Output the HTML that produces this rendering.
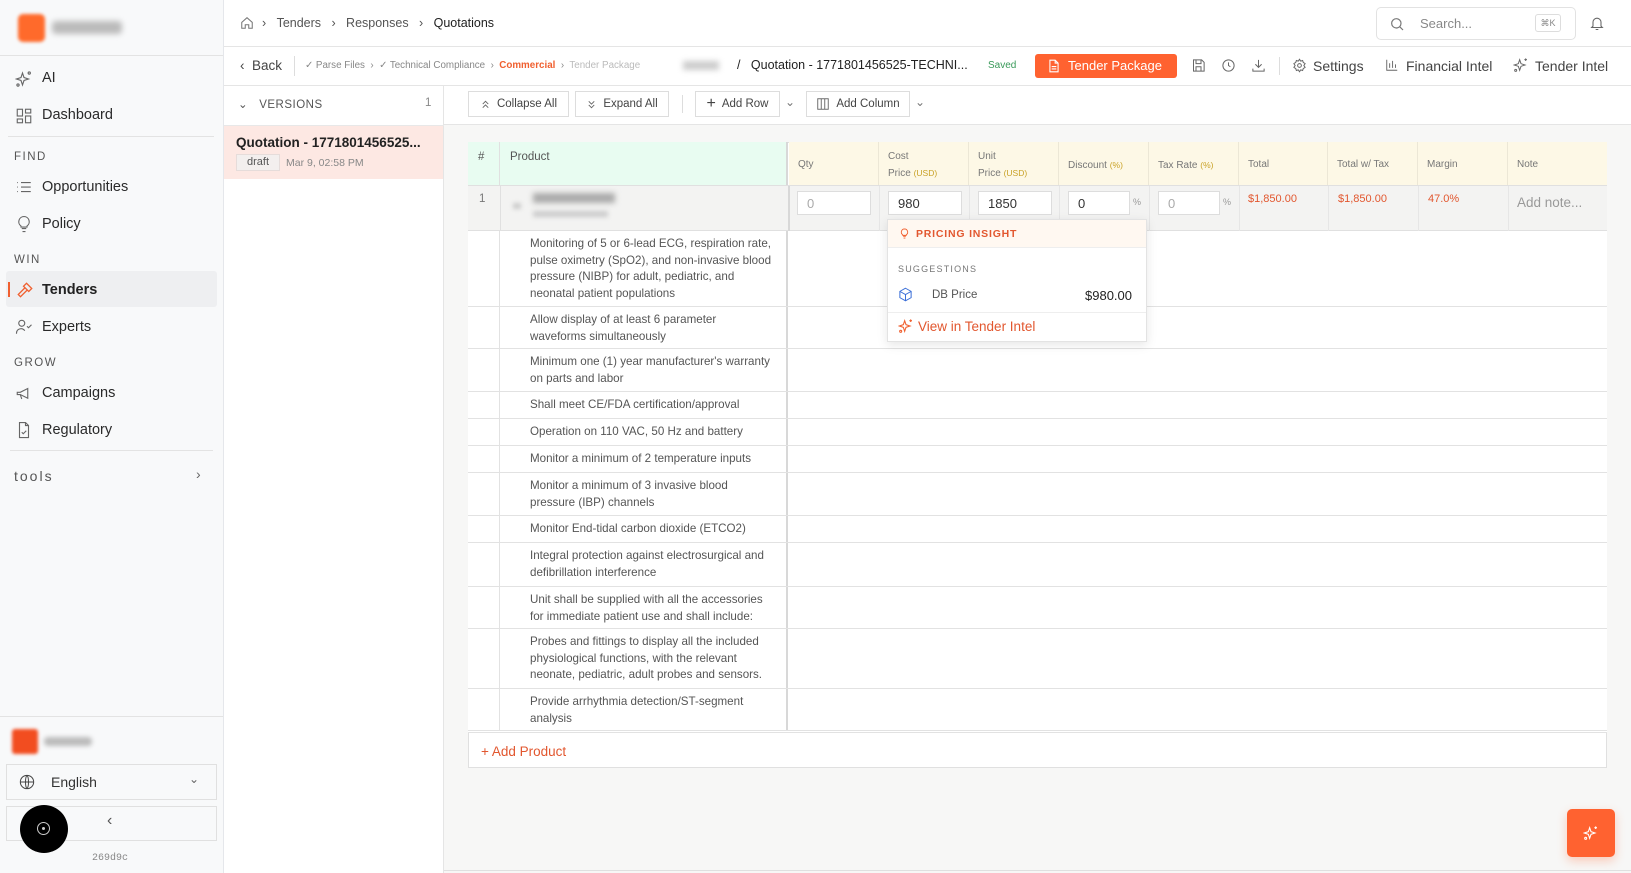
<!DOCTYPE html>
<html><head><meta charset="utf-8"><style>
*{box-sizing:border-box;margin:0;padding:0}
body{width:1631px;height:873px;overflow:hidden;font-family:"Liberation Sans",sans-serif;color:#333;background:#fff;position:relative}
.a{position:absolute}
.side{left:0;top:0;width:224px;height:873px;background:#f8f9fa;border-right:1px solid #e5e7eb}
.nav{position:absolute;left:42px;font-size:14.5px;color:#2a2a2a}
.ic{position:absolute;left:15px;width:18px;height:18px}
.sec{position:absolute;left:14px;font-size:11.5px;letter-spacing:1.5px;color:#555}
.hdr{font-size:12.5px;color:#555}
.btn{position:absolute;border:1px solid #ddd;background:#fff;font-size:11.5px;color:#444;display:flex;align-items:center;justify-content:center;gap:6px;height:26px;top:91px}
.th{position:absolute;top:142px;height:43px;background:#fdf8e6;border-right:1px solid #ece7d6;font-size:10px;color:#777;padding:7px 0 0 9px;line-height:16px}
.th .u{color:#c9a227;font-size:8.5px}
.in{position:absolute;top:191px;height:24px;background:#fff;border:1px solid #ddd;font-size:13px;padding:4px 0 0 9px;width:74px}
.sr{position:absolute;left:468px;width:1139px;border-bottom:1px solid #e2e2e2;background:#fff}
.sr .n{position:absolute;left:0;top:0;bottom:0;width:32px;border-right:1px solid #e2e2e2}
.sr .p{position:absolute;left:32px;top:0;bottom:0;width:288px;border-right:2px solid #d8d8d8;padding:5px 0 0 30px;font-size:11.6px;line-height:16.5px;color:#555;white-space:nowrap;overflow:hidden}
</style></head><body>

<div class="a side">
 <div class="a" style="left:18px;top:14px;width:27px;height:28px;background:#ff6a2b;border-radius:5px;filter:blur(1.5px)"></div>
 <div class="a" style="left:52px;top:21px;width:70px;height:13px;background:#bbb;border-radius:4px;filter:blur(3px)"></div>
 <div class="a" style="left:0;top:55px;width:223px;border-top:1px solid #e3e3e3"></div>
 <svg class="ic" style="top:70px" viewBox="0 0 24 24" fill="none" stroke="#666" stroke-width="1.5"><path d="M10 4l2 6 6 2-6 2-2 6-2-6-6-2 6-2z"/><circle cx="19" cy="4" r="1.5"/><circle cx="4" cy="20" r="1.5"/></svg>
 <div class="nav" style="top:70px">AI</div>
 <svg class="ic" style="top:107px" viewBox="0 0 24 24" fill="none" stroke="#666" stroke-width="1.5"><rect x="3" y="3" width="7" height="9"/><rect x="14" y="3" width="7" height="5"/><rect x="14" y="12" width="7" height="9"/><rect x="3" y="16" width="7" height="5"/></svg>
 <div class="nav" style="top:107px">Dashboard</div>
 <div class="a" style="left:8px;top:136px;width:206px;border-top:1px solid #e3e3e3"></div>
 <div class="sec" style="top:151px">FIND</div>
 <svg class="ic" style="top:178px" viewBox="0 0 24 24" fill="none" stroke="#666" stroke-width="1.5"><path d="M8 6h13M8 12h13M8 18h13M3 6h1M3 12h1M3 18h1"/></svg>
 <div class="nav" style="top:179px">Opportunities</div>
 <svg class="ic" style="top:215px" viewBox="0 0 24 24" fill="none" stroke="#666" stroke-width="1.5"><path d="M9 18h6M10 22h4M12 2a7 7 0 0 0-4 12.7V16h8v-1.3A7 7 0 0 0 12 2z"/></svg>
 <div class="nav" style="top:216px">Policy</div>
 <div class="sec" style="top:254px">WIN</div>
 <div class="a" style="left:6px;top:271px;width:211px;height:36px;background:#eeeff1;border-radius:3px"></div>
 <div class="a" style="left:8px;top:282px;width:2px;height:15px;background:#f06030"></div>
 <svg class="ic" style="top:281px;left:16px" viewBox="0 0 24 24" fill="none" stroke="#f06030" stroke-width="1.7"><path d="M14 3l7 7-4 4-7-7z M12 9l-9 9 3 3 9-9"/></svg>
 <div class="nav" style="top:282px;font-weight:bold;color:#222">Tenders</div>
 <svg class="ic" style="top:318px" viewBox="0 0 24 24" fill="none" stroke="#666" stroke-width="1.5"><circle cx="9" cy="7" r="4"/><path d="M2 21v-1a6 6 0 0 1 11-3M16 11l2 2 4-4"/></svg>
 <div class="nav" style="top:319px">Experts</div>
 <div class="sec" style="top:357px">GROW</div>
 <svg class="ic" style="top:384px" viewBox="0 0 24 24" fill="none" stroke="#666" stroke-width="1.5"><path d="M3 11v3h4l10 5V6L7 11H3zM7 14l2 6"/></svg>
 <div class="nav" style="top:385px">Campaigns</div>
 <svg class="ic" style="top:421px" viewBox="0 0 24 24" fill="none" stroke="#666" stroke-width="1.5"><path d="M14 2H6v20h12V6zM14 2v4h4M9 15l2 2 4-4"/></svg>
 <div class="nav" style="top:422px">Regulatory</div>
 <div class="a" style="left:10px;top:450px;width:203px;border-top:1px solid #e3e3e3"></div>
 <div class="a" style="left:14px;top:468px;font-size:14px;letter-spacing:2px;color:#555">tools</div>
 <div class="a" style="left:196px;top:466px;font-size:14px;color:#666">›</div>
 <div class="a" style="left:0;top:716px;width:223px;border-top:1px solid #e3e3e3"></div>
 <div class="a" style="left:12px;top:729px;width:26px;height:25px;background:#f24d20;border-radius:3px;filter:blur(1.5px)"></div>
 <div class="a" style="left:44px;top:737px;width:48px;height:9px;background:#bbb;border-radius:4px;filter:blur(2.5px)"></div>
 <div class="a" style="left:6px;top:764px;width:211px;height:36px;border:1px solid #e0e0e0;background:#f8f9fa"></div>
 <svg class="a" style="left:19px;top:774px;width:16px;height:16px" viewBox="0 0 24 24" fill="none" stroke="#444" stroke-width="1.5"><circle cx="12" cy="12" r="10"/><path d="M2 12h20M12 2c3 3 3 17 0 20M12 2c-3 3-3 17 0 20"/></svg>
 <div class="a" style="left:51px;top:774px;font-size:14px;color:#333">English</div>
 <div class="a" style="left:189px;top:772px;font-size:12px;color:#666">⌄</div>
 <div class="a" style="left:6px;top:806px;width:211px;height:35px;border:1px solid #e0e0e0;background:#f8f9fa"></div>
 <div class="a" style="left:107px;top:812px;font-size:16px;color:#555">‹</div>
 <div class="a" style="left:20px;top:805px;width:48px;height:48px;border-radius:50%;background:#000"></div>
 <div class="a" style="left:37px;top:822px;width:13px;height:13px;border:1.3px solid #ccc;border-radius:50%"></div>
 <div class="a" style="left:42px;top:827px;width:3px;height:3px;background:#ccc;border-radius:50%"></div>
 <div class="a" style="left:92px;top:853px;font-size:10px;color:#888;font-family:'Liberation Mono',monospace">269d9c</div>
</div>

<div class="a" style="left:224px;top:0;width:1407px;height:47px;border-bottom:1px solid #e5e5e5"></div>
<svg class="a" style="left:240px;top:16px;width:14px;height:14px" viewBox="0 0 24 24" fill="none" stroke="#777" stroke-width="1.8"><path d="M3 11l9-8 9 8v10h-6v-6h-6v6H3z"/></svg>
<div class="a hdr" style="left:262px;top:16px">›&nbsp;&nbsp;&nbsp;Tenders&nbsp;&nbsp;&nbsp;›&nbsp;&nbsp;&nbsp;Responses&nbsp;&nbsp;&nbsp;›&nbsp;&nbsp;&nbsp;<span style="color:#222">Quotations</span></div>
<div class="a" style="left:1376px;top:7px;width:200px;height:33px;border:1px solid #e2e2e2;border-radius:5px"></div>
<svg class="a" style="left:1389px;top:16px;width:16px;height:16px" viewBox="0 0 24 24" fill="none" stroke="#777" stroke-width="1.8"><circle cx="11" cy="11" r="7"/><path d="M16 16l5 5"/></svg>
<div class="a" style="left:1420px;top:16px;font-size:13px;color:#888">Search...</div>
<div class="a" style="left:1535px;top:14px;width:26px;height:18px;border:1px solid #ddd;border-radius:3px;font-size:9px;color:#888;text-align:center;line-height:16px">⌘K</div>
<svg class="a" style="left:1589px;top:15px;width:16px;height:17px" viewBox="0 0 24 24" fill="none" stroke="#666" stroke-width="1.6"><path d="M6 16V10a6 6 0 0 1 12 0v6l2 2H4zM10 21h4"/></svg>

<div class="a" style="left:224px;top:47px;width:1407px;height:39px;border-bottom:1px solid #e5e5e5"></div>
<div class="a" style="left:240px;top:58px;font-size:13.5px;color:#444">‹&nbsp; Back</div>
<div class="a" style="left:294px;top:56px;height:20px;border-left:1px solid #ddd"></div>
<div class="a" style="left:305px;top:60px;font-size:9.8px;color:#888">✓ Parse Files&nbsp; ›&nbsp; ✓ Technical Compliance&nbsp; ›&nbsp; <b style="color:#f06030">Commercial</b>&nbsp; ›&nbsp; <span style="color:#bbb">Tender Package</span></div>
<div class="a" style="left:683px;top:61px;width:36px;height:9px;background:#ccc;filter:blur(3px)"></div>
<div class="a" style="left:737px;top:58px;font-size:12.5px;color:#222">/&nbsp;&nbsp; Quotation - 1771801456525-TECHNI...</div>
<div class="a" style="left:988px;top:60px;font-size:10px;color:#3a9a5a">Saved</div>
<div class="a" style="left:1035px;top:54px;width:142px;height:24px;background:#ff6230;border-radius:3px;color:#fff;font-size:13px;line-height:24px;padding-left:33px">Tender Package</div>
<svg class="a" style="left:1047px;top:59px;width:14px;height:14px" viewBox="0 0 24 24" fill="none" stroke="#fff" stroke-width="1.8"><path d="M14 2H5v20h14V7zM14 2v5h5M8 13h8M8 17h8"/></svg>
<svg class="a" style="left:1191px;top:58px;width:15px;height:15px" viewBox="0 0 24 24" fill="none" stroke="#666" stroke-width="1.6"><path d="M4 3h13l4 4v14H4zM8 3v6h8V3M8 21v-7h8v7"/></svg>
<svg class="a" style="left:1221px;top:58px;width:15px;height:15px" viewBox="0 0 24 24" fill="none" stroke="#666" stroke-width="1.6"><circle cx="12" cy="12" r="9"/><path d="M12 7v5l3 2"/></svg>
<svg class="a" style="left:1251px;top:58px;width:15px;height:15px" viewBox="0 0 24 24" fill="none" stroke="#666" stroke-width="1.6"><path d="M12 3v12M7 10l5 5 5-5M3 17v4h18v-4"/></svg>
<div class="a" style="left:1279px;top:57px;height:18px;border-left:1px solid #ddd"></div>
<svg class="a" style="left:1292px;top:58px;width:15px;height:15px" viewBox="0 0 24 24" fill="none" stroke="#666" stroke-width="1.6"><circle cx="12" cy="12" r="3"/><path d="M12 2l2 3 3-1 1 3 3 2-2 3 2 3-3 2-1 3-3-1-2 3-2-3-3 1-1-3-3-2 2-3-2-3 3-2 1-3 3 1z"/></svg>
<div class="a" style="left:1313px;top:58px;font-size:14px;color:#444">Settings</div>
<svg class="a" style="left:1385px;top:58px;width:14px;height:14px" viewBox="0 0 24 24" fill="none" stroke="#666" stroke-width="1.6"><path d="M3 3v18h18M8 17V9M13 17V5M18 17v-6"/></svg>
<div class="a" style="left:1406px;top:58px;font-size:14px;color:#444">Financial Intel</div>
<svg class="a" style="left:1513px;top:57px;width:16px;height:16px" viewBox="0 0 24 24" fill="none" stroke="#666" stroke-width="1.5"><path d="M10 4l2 6 6 2-6 2-2 6-2-6-6-2 6-2z"/><path d="M19 2v4M17 4h4"/><circle cx="4" cy="20" r="1.5"/></svg>
<div class="a" style="left:1535px;top:58px;font-size:14px;color:#444">Tender Intel</div>

<div class="a" style="left:224px;top:86px;width:220px;height:787px;border-right:1px solid #e5e5e5;background:#fff"></div>
<div class="a" style="left:224px;top:86px;width:220px;height:40px;border-bottom:1px solid #e8e8e8"></div>
<div class="a" style="left:238px;top:97px;font-size:11.5px;color:#555;letter-spacing:.5px">⌄&nbsp;&nbsp; VERSIONS</div>
<div class="a" style="left:425px;top:97px;font-size:11.5px;color:#888">1</div>
<div class="a" style="left:224px;top:126px;width:219px;height:53px;background:#fde8e3"></div>
<div class="a" style="left:236px;top:135px;font-size:13.5px;font-weight:bold;color:#222">Quotation - 1771801456525...</div>
<div class="a" style="left:236px;top:154px;width:44px;height:17px;background:#f3efee;border:1px solid #e6dcda;font-size:11px;color:#555;text-align:center;line-height:15px">draft</div>
<div class="a" style="left:286px;top:157px;font-size:10.5px;color:#888">Mar 9, 02:58 PM</div>

<div class="a" style="left:444px;top:86px;width:1187px;height:787px;background:#f7f7f6"></div>
<div class="a" style="left:444px;top:86px;width:1187px;height:39px;background:#fff;border-bottom:1px solid #e5e5e5"></div>
<div class="btn" style="left:468px;width:101px"><svg width="11" height="11" viewBox="0 0 24 24" fill="none" stroke="#666" stroke-width="2"><path d="M6 11l6-6 6 6M6 19l6-6 6 6"/></svg>Collapse All</div>
<div class="btn" style="left:575px;width:94px"><svg width="11" height="11" viewBox="0 0 24 24" fill="none" stroke="#666" stroke-width="2"><path d="M6 5l6 6 6-6M6 13l6 6 6-6"/></svg>Expand All</div>
<div class="a" style="left:682px;top:95px;height:18px;border-left:1px solid #ddd"></div>
<div class="btn" style="left:695px;width:85px"><span style="font-size:16px">+</span>Add Row</div>
<div class="a" style="left:785px;top:95px;font-size:12px;color:#777">⌄</div>
<div class="btn" style="left:806px;width:104px"><svg width="14" height="14" viewBox="0 0 24 24" fill="none" stroke="#666" stroke-width="1.6"><rect x="3" y="3" width="18" height="18"/><path d="M9 3v18M15 3v18"/></svg>Add Column</div>
<div class="a" style="left:915px;top:95px;font-size:12px;color:#777">⌄</div>

<div class="a" style="left:468px;top:142px;width:1139px;height:626px;background:#fff;border:1px solid #e0e0e0"></div>
<div class="a" style="left:468px;top:142px;width:32px;height:43px;background:#e8fcf1;border-right:1px solid #e0e0e0;font-size:11.5px;color:#555;padding:9px 0 0 10px">#</div>
<div class="a" style="left:500px;top:142px;width:288px;height:43px;background:#e8fcf1;border-right:2px solid #d8d8d8;font-size:11.5px;color:#555;padding:9px 0 0 10px">Product</div>
<div class="th" style="left:789px;width:90px;padding-top:15px">Qty</div>
<div class="th" style="left:879px;width:90px">Cost<br>Price <span class="u">(USD)</span></div>
<div class="th" style="left:969px;width:90px">Unit<br>Price <span class="u">(USD)</span></div>
<div class="th" style="left:1059px;width:90px;padding-top:15px">Discount <span class="u">(%)</span></div>
<div class="th" style="left:1149px;width:90px;padding-top:15px">Tax Rate <span class="u">(%)</span></div>
<div class="th" style="left:1239px;width:89px;padding-top:15px">Total</div>
<div class="th" style="left:1328px;width:90px;padding-top:15px">Total w/ Tax</div>
<div class="th" style="left:1418px;width:90px;padding-top:15px">Margin</div>
<div class="th" style="left:1508px;width:99px;padding-top:15px;border-right:none">Note</div>
<div class="a" style="left:468px;top:185px;width:1139px;border-top:1px solid #e0e0e0"></div>

<div class="a" style="left:468px;top:186px;width:1139px;height:45px;background:#f3f3f2;border-bottom:1px solid #e0e0e0"></div>
<div class="a" style="left:500px;top:186px;height:45px;border-left:1px solid #e0e0e0"></div>
<div class="a" style="left:788px;top:186px;height:547px;border-left:2px solid #d8d8d8"></div>
<div class="a" style="left:479px;top:193px;font-size:11.5px;color:#777">1</div>
<div class="a" style="left:533px;top:193px;width:82px;height:10px;background:#aaa;filter:blur(3px)"></div>
<div class="a" style="left:533px;top:211px;width:75px;height:6px;background:#ccc;filter:blur(2.5px)"></div>
<div class="a" style="left:513px;top:203px;width:8px;height:6px;background:#ccc;filter:blur(2px)"></div>
<div class="in" style="left:797px;color:#aaa">0</div>
<div class="in" style="left:888px">980</div>
<div class="in" style="left:978px">1850</div>
<div class="in" style="left:1068px;width:62px">0</div>
<div class="a" style="left:1133px;top:197px;font-size:9px;color:#999">%</div>
<div class="in" style="left:1158px;width:62px;color:#aaa">0</div>
<div class="a" style="left:1223px;top:197px;font-size:9px;color:#999">%</div>
<div class="a" style="left:1248px;top:193px;font-size:11px;color:#e2572f">$1,850.00</div>
<div class="a" style="left:1338px;top:193px;font-size:11px;color:#e2572f">$1,850.00</div>
<div class="a" style="left:1428px;top:193px;font-size:11px;color:#e2572f">47.0%</div>
<div class="a" style="left:1517px;top:195px;font-size:13.5px;color:#999">Add note...</div>
<div class="a" style="left:879px;top:186px;height:45px;border-left:1px solid #e6e6e6"></div>
<div class="a" style="left:969px;top:186px;height:45px;border-left:1px solid #e6e6e6"></div>
<div class="a" style="left:1059px;top:186px;height:45px;border-left:1px solid #e6e6e6"></div>
<div class="a" style="left:1149px;top:186px;height:45px;border-left:1px solid #e6e6e6"></div>
<div class="a" style="left:1239px;top:186px;height:45px;border-left:1px solid #e6e6e6"></div>
<div class="a" style="left:1328px;top:186px;height:45px;border-left:1px solid #e6e6e6"></div>
<div class="a" style="left:1418px;top:186px;height:45px;border-left:1px solid #e6e6e6"></div>
<div class="a" style="left:1508px;top:186px;height:45px;border-left:1px solid #e6e6e6"></div>

<div class="sr" style="top:231px;height:76px"><div class="n"></div><div class="p">Monitoring of 5 or 6-lead ECG, respiration rate,<br>pulse oximetry (SpO2), and non-invasive blood<br>pressure (NIBP) for adult, pediatric, and<br>neonatal patient populations</div></div>
<div class="sr" style="top:307px;height:42px"><div class="n"></div><div class="p">Allow display of at least 6 parameter<br>waveforms simultaneously</div></div>
<div class="sr" style="top:349px;height:43px"><div class="n"></div><div class="p">Minimum one (1) year manufacturer's warranty<br>on parts and labor</div></div>
<div class="sr" style="top:392px;height:27px"><div class="n"></div><div class="p">Shall meet CE/FDA certification/approval</div></div>
<div class="sr" style="top:419px;height:27px"><div class="n"></div><div class="p">Operation on 110 VAC, 50 Hz and battery</div></div>
<div class="sr" style="top:446px;height:27px"><div class="n"></div><div class="p">Monitor a minimum of 2 temperature inputs</div></div>
<div class="sr" style="top:473px;height:43px"><div class="n"></div><div class="p">Monitor a minimum of 3 invasive blood<br>pressure (IBP) channels</div></div>
<div class="sr" style="top:516px;height:27px"><div class="n"></div><div class="p">Monitor End-tidal carbon dioxide (ETCO2)</div></div>
<div class="sr" style="top:543px;height:44px"><div class="n"></div><div class="p">Integral protection against electrosurgical and<br>defibrillation interference</div></div>
<div class="sr" style="top:587px;height:42px"><div class="n"></div><div class="p">Unit shall be supplied with all the accessories<br>for immediate patient use and shall include:</div></div>
<div class="sr" style="top:629px;height:60px"><div class="n"></div><div class="p">Probes and fittings to display all the included<br>physiological functions, with the relevant<br>neonate, pediatric, adult probes and sensors.</div></div>
<div class="sr" style="top:689px;height:44px;border-bottom:3px double #e2e2e2"><div class="n"></div><div class="p">Provide arrhythmia detection/ST-segment<br>analysis</div></div>
<div class="a" style="left:481px;top:744px;font-size:13.5px;color:#e2572f">+ Add Product</div>

<div class="a" style="left:887px;top:219px;width:260px;height:123px;background:#fff;border:1px solid #e3e3e3;box-shadow:0 3px 10px rgba(0,0,0,.1)"></div>
<div class="a" style="left:888px;top:220px;width:258px;height:28px;background:#fff8f1;border-bottom:1px solid #eee"></div>
<svg class="a" style="left:899px;top:227px;width:11px;height:13px" viewBox="0 0 24 24" fill="none" stroke="#f06030" stroke-width="2"><path d="M9 18h6M10 22h4M12 2a7 7 0 0 0-4 12.7V16h8v-1.3A7 7 0 0 0 12 2z"/></svg>
<div class="a" style="left:916px;top:228px;font-size:10.5px;font-weight:bold;letter-spacing:.8px;color:#e2572f">PRICING INSIGHT</div>
<div class="a" style="left:898px;top:264px;font-size:9px;letter-spacing:1.2px;color:#777">SUGGESTIONS</div>
<svg class="a" style="left:898px;top:287px;width:15px;height:15px" viewBox="0 0 24 24" fill="none" stroke="#3b6fd8" stroke-width="1.6"><path d="M12 2l9 5v10l-9 5-9-5V7zM3 7l9 5 9-5M12 12v10"/></svg>
<div class="a" style="left:932px;top:289px;font-size:11.5px;color:#555">DB Price</div>
<div class="a" style="left:1085px;top:288px;font-size:13px;color:#222">$980.00</div>
<div class="a" style="left:888px;top:312px;width:258px;border-top:1px solid #eee"></div>
<svg class="a" style="left:898px;top:318px;width:16px;height:16px" viewBox="0 0 24 24" fill="none" stroke="#f06030" stroke-width="1.6"><path d="M10 4l2 6 6 2-6 2-2 6-2-6-6-2 6-2z"/><path d="M19 2v4M17 4h4"/><circle cx="4" cy="20" r="1.5"/></svg>
<div class="a" style="left:918px;top:319px;font-size:13.5px;color:#e2572f">View in Tender Intel</div>

<div class="a" style="left:1567px;top:809px;width:48px;height:48px;background:#ff6230;border-radius:5px;box-shadow:0 4px 10px rgba(255,98,48,.3)"></div>
<svg class="a" style="left:1583px;top:825px;width:16px;height:16px" viewBox="0 0 24 24" fill="none" stroke="#fff" stroke-width="1.6"><path d="M10 4l2 6 6 2-6 2-2 6-2-6-6-2 6-2z"/><path d="M19 2v4M17 4h4"/><circle cx="4" cy="20" r="1.5"/></svg>
<div class="a" style="left:444px;top:870px;width:1187px;border-top:1px solid #e0e0e0"></div>
</body></html>
